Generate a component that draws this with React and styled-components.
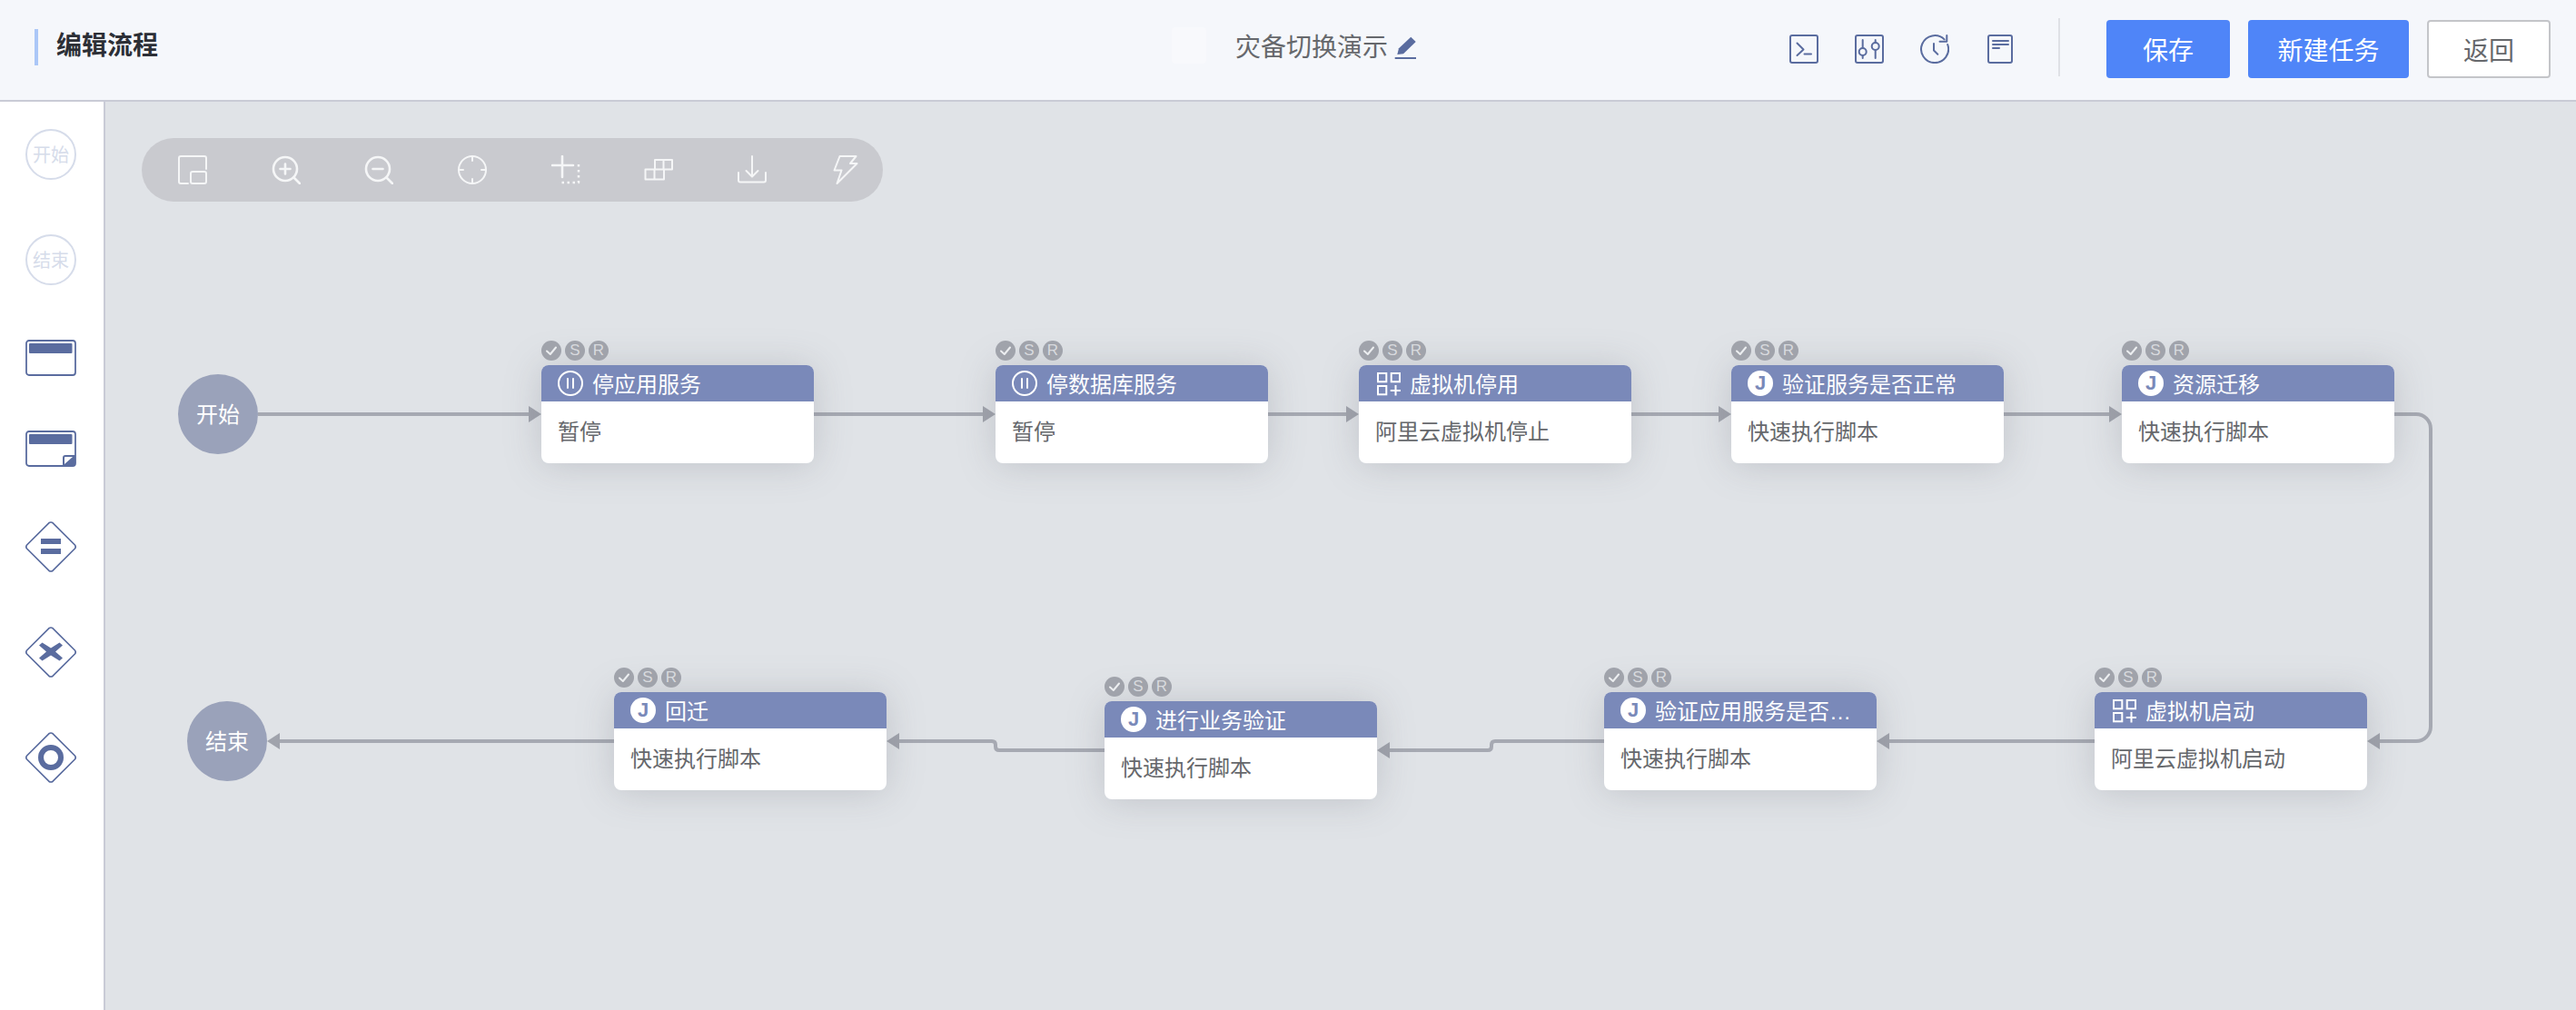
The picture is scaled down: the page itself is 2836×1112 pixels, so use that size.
import React from 'react';
import styled, { createGlobalStyle } from 'styled-components';

const ICON = '#5a6c9f';
const LINE = '#a6a9b2';
const SIDE_W = 116;
const HEAD_H = 112;

const GlobalStyle = createGlobalStyle`
  html, body {
    margin: 0;
    padding: 0;
    background: #fff;
    font-family: "Liberation Sans", "Noto Sans CJK SC", sans-serif;
  }
  * { box-sizing: border-box; }
`;

const Page = styled.div`
  width: 2836px;
  height: 1112px;
  display: flex;
  flex-direction: column;
  overflow: hidden;
`;

const Header = styled.header`
  height: ${HEAD_H}px;
  flex: none;
  display: grid;
  grid-template-columns: 1252px auto 1fr auto;
  align-items: center;
  padding: 0 28px 2px 38px;
  background: #f5f7fb;
  border-bottom: 2px solid #c9cbd6;
`;

const PageTitle = styled.h1`
  margin: 0 0 4px;
  height: 40px;
  padding-left: 20px;
  border-left: 4px solid #abc7f7;
  font-size: 28px;
  line-height: 37px;
  font-weight: 700;
  color: #2c2f36;
`;

const FlowName = styled.div`
  display: flex;
  align-items: center;
  margin-bottom: 2px;
  color: #66686c;
  font-size: 28px;
  line-height: 40px;
  svg { margin-left: 7px; }
`;

const Ghost = styled.span`
  width: 38px;
  height: 40px;
  margin: -6px 32px 0 0;
  border-radius: 4px;
  background: #f8f9fc;
`;

const Actions = styled.div`
  grid-column: 4;
  display: flex;
  align-items: center;
`;

const HeadIcons = styled.div`
  display: flex;
  gap: 40px;
  svg:last-child { margin-left: 2px; }
`;

const Divider = styled.span`
  width: 2px;
  height: 64px;
  margin: 0 51px 4px 46px;
  background: #dfe1e6;
`;

const Buttons = styled.div`
  display: flex;
  gap: 20px;
`;

const Button = styled.button`
  height: 64px;
  padding: 0;
  width: ${p => p.$w}px;
  border-radius: 4px;
  font: inherit;
  font-size: 28px;
  color: ${p => (p.$plain ? '#66686c' : '#fff')};
  background: ${p => (p.$plain ? '#fff' : '#4f85f8')};
  border: ${p => (p.$plain ? '2px solid #c4c5c9' : 'none')};
`;

const Main = styled.div`
  flex: 1;
  display: flex;
  min-height: 0;
`;

const Sidebar = styled.aside`
  width: ${SIDE_W}px;
  flex: none;
  display: flex;
  flex-direction: column;
  align-items: center;
  gap: 60px;
  padding: 30px 2px 0 0;
  background: #fff;
  border-right: 2px solid #c9cbd6;
`;

const Oval = styled.div`
  width: 56px;
  height: 56px;
  display: flex;
  align-items: center;
  justify-content: center;
  padding-bottom: 2px;
  border: 2px solid #d6dcea;
  border-radius: 50%;
  font-size: 20px;
  color: #d6dcea;
`;

const Canvas = styled.main`
  position: relative;
  flex: 1;
  background: #e0e3e7;
`;

const Toolbar = styled.div`
  position: absolute;
  left: 40px;
  top: 40px;
  width: 816px;
  height: 70px;
  display: flex;
  align-items: center;
  gap: 70.7px;
  padding-left: 40px;
  border-radius: 35px;
  background: #c9cacf;
`;

const Edges = styled.svg`
  position: absolute;
  inset: 0;
`;

const Circle = styled.div`
  position: absolute;
  left: ${p => p.$x - SIDE_W}px;
  top: ${p => p.$y - HEAD_H}px;
  width: 88px;
  height: 88px;
  display: flex;
  align-items: center;
  justify-content: center;
  padding-bottom: 3px;
  border-radius: 50%;
  background: #9aa2ba;
  color: #fff;
  font-size: 24px;
`;

const Node = styled.div`
  position: absolute;
  left: ${p => p.$x - SIDE_W}px;
  top: ${p => p.$y - HEAD_H}px;
  width: 300px;
  height: 108px;
  border-radius: 8px;
  background: #fff;
  box-shadow: 0 2px 40px rgba(110, 115, 125, 0.28);
`;

const Badges = styled.div`
  position: absolute;
  left: 0;
  top: -27px;
  display: flex;
  gap: 4px;
`;

const Badge = styled.span`
  width: 22px;
  height: 22px;
  display: flex;
  align-items: center;
  justify-content: center;
  border-radius: 50%;
  background: #a0a3ab;
  color: #d8dade;
  font-size: 17px;
  line-height: 22px;
`;

const NodeHead = styled.div`
  height: 40px;
  display: flex;
  align-items: center;
  gap: 10px;
  padding-left: 18px;
  border-radius: 8px 8px 0 0;
  background: #7a89b9;
  color: #fff;
  font-size: 24px;
`;

const NodeTitle = styled.span`
  max-width: 224px;
  height: 40px;
  overflow: hidden;
  white-space: nowrap;
  text-overflow: ellipsis;
  line-height: 43px;
`;

const NodeBody = styled.div`
  padding: 16px 18px 0;
  color: #66686c;
  font-size: 24px;
  line-height: 36px;
`;

const JMark = styled.span`
  width: 28px;
  height: 28px;
  flex: none;
  display: flex;
  align-items: center;
  justify-content: center;
  border-radius: 50%;
  background: #fff;
  color: #7a89b9;
  font-size: 22px;
  font-weight: 700;
`;

const Stroke = ({ size = 32, color = ICON, width = 2, children, ...rest }) => (
  <svg width={size} height={size} viewBox={`0 0 ${size} ${size}`} fill="none" stroke={color} strokeWidth={width} strokeLinecap="round" strokeLinejoin="round" {...rest}>
    {children}
  </svg>
);

const Pencil = () => (
  <svg width="24" height="26" viewBox="0 0 24 26" fill={ICON}>
    <path d="M3.3 20 L5 13.3 L18.3 .7 L23.7 6 L10 19.3 Z" />
    <rect x="0.7" y="23" width="23.6" height="2" />
  </svg>
);

const headIcons = [
  <><rect x="1" y="1" width="30" height="30" rx="2" /><path d="M8.5 9.5 15.5 16.5 8.5 23M16.5 21.5H24" /></>,
  <><rect x="1" y="1" width="30" height="30" rx="2" /><path d="M8.7 6V15M8.7 23V26M22.7 6V9M22.7 17V26" /><circle cx="8.7" cy="19" r="4" /><circle cx="22.7" cy="13" r="4" /></>,
  <><path d="M26.6 5.4A15 15 0 1 0 30.2 11" /><path d="M29.3 1V7.7H21.5M15 10V17.5L19.3 21.7" /></>,
  <><rect x="1" y="1" width="26" height="30" rx="2" /><path d="M6 7H23M6 11H23M6 15H13" /></>,
];

const toolIcons = [
  <><path d="M11 31H3A2 2 0 0 1 1 29V3A2 2 0 0 1 3 1H29A2 2 0 0 1 31 3V15" /><rect x="14" y="18" width="17" height="13" rx="2" /></>,
  <g strokeWidth="2.6"><circle cx="15" cy="15" r="13" /><path d="M24.5 24.5 31 31M15 9.5V20.5M9.5 15H20.5" /></g>,
  <g strokeWidth="2.6"><circle cx="15" cy="15" r="13" /><path d="M24.5 24.5 31 31M9.5 15H20.5" /></g>,
  <><circle cx="16" cy="16" r="15" /><path d="M16 1V6M16 26V31M1 16H6M26 16H31" /></>,
  <><path d="M1 11H24M12 1V24" strokeWidth="2.6" /><path d="M30 10V30H10" strokeDasharray="2.5 3.5" strokeLinecap="butt" strokeWidth="2.5" /></>,
  <><path d="M12 15.5V5H31V15.5H12ZM21.5 5V15.5M1.5 15.5H22V26.5H1.5ZM11.5 15.5V26.5" /></>,
  <><path d="M16 1V23M9.5 17 16 23.5 22.5 17M1 19V27.5A2 2 0 0 0 3 29.5H29A2 2 0 0 0 31 27.5V19" /></>,
  <path d="M9.5 1H27.5L21 9H28.5L6.5 31L11.5 16.5H3.5Z" />,
];

const Rect = ({ fold }) => (
  <svg width="56" height="40" viewBox="0 0 56 40">
    <rect x="1" y="1" width="54" height="38" rx="3" fill="#fff" stroke={ICON} strokeWidth="1.8" />
    <rect x="4" y="4" width="47.5" height="11" rx="1" fill={ICON} />
    {fold && (
      <>
        <path d="M41 39V30Q41 27 44 27H55V36Q55 39 52 39Z" fill={ICON} />
        <path d="M43 37V30Q43 29 44 29H52Z" fill="#fff" />
      </>
    )}
  </svg>
);

const Diamond = ({ children }) => (
  <svg width="56" height="56" viewBox="0 0 56 56" fill={ICON}>
    <path d="M25.8 1.8Q28 0.2 30.2 1.8L54.4 26Q56 28 54.4 30L30.2 54.2Q28 55.8 25.8 54.2L1.6 30Q0 28 1.6 26Z" fill="#fff" stroke={ICON} strokeWidth="1.7" />
    {children}
  </svg>
);

const nodes = [
  { x: 596, y: 402, title: '停应用服务', text: '暂停', icon: 'pause' },
  { x: 1096, y: 402, title: '停数据库服务', text: '暂停', icon: 'pause' },
  { x: 1496, y: 402, title: '虚拟机停用', text: '阿里云虚拟机停止', icon: 'grid' },
  { x: 1906, y: 402, title: '验证服务是否正常', text: '快速执行脚本', icon: 'j' },
  { x: 2336, y: 402, title: '资源迁移', text: '快速执行脚本', icon: 'j' },
  { x: 2306, y: 762, title: '虚拟机启动', text: '阿里云虚拟机启动', icon: 'grid' },
  { x: 1766, y: 762, title: '验证应用服务是否正常', text: '快速执行脚本', icon: 'j' },
  { x: 1216, y: 772, title: '进行业务验证', text: '快速执行脚本', icon: 'j' },
  { x: 676, y: 762, title: '回迁', text: '快速执行脚本', icon: 'j' },
];

// page coordinates, the svg below has its viewBox shifted to match
const edges = [
  { d: 'M284 456H584', tip: [596, 456, 1] },
  { d: 'M896 456H1084', tip: [1096, 456, 1] },
  { d: 'M1396 456H1484', tip: [1496, 456, 1] },
  { d: 'M1796 456H1894', tip: [1906, 456, 1] },
  { d: 'M2206 456H2324', tip: [2336, 456, 1] },
  { d: 'M2636 456H2660A16 16 0 0 1 2676 472V800A16 16 0 0 1 2660 816H2618', tip: [2606, 816, -1] },
  { d: 'M2306 816H2078', tip: [2066, 816, -1] },
  { d: 'M1766 816H1646Q1642 816 1642 820V822Q1642 826 1638 826H1528', tip: [1516, 826, -1] },
  { d: 'M1216 826H1100Q1096 826 1096 822V820Q1096 816 1092 816H988', tip: [976, 816, -1] },
  { d: 'M676 816H306', tip: [294, 816, -1] },
];

function NodeIcon({ type }) {
  if (type === 'j') return <JMark>J</JMark>;
  if (type === 'pause') {
    return (
      <Stroke size={28} color="#fff" style={{ flex: 'none' }}>
        <circle cx="14" cy="14" r="13" />
        <path d="M11 9V19M17 9V19" />
      </Stroke>
    );
  }
  return (
    <Stroke size={28} color="#fff" strokeLinecap="butt" strokeLinejoin="miter" style={{ flex: 'none' }}>
      <rect x="3" y="3" width="9.3" height="9.3" />
      <rect x="17.7" y="3" width="9.3" height="9.3" />
      <rect x="3" y="17" width="9.3" height="9.3" />
      <path d="M16.7 22H28M22.5 16V27.5" />
    </Stroke>
  );
}

function FlowNode({ node }) {
  return (
    <Node $x={node.x} $y={node.y}>
      <Badges>
        <Badge>
          <Stroke size={22} color="#eceef0">
            <path d="M6 11.5 9.8 15 16 7.5" />
          </Stroke>
        </Badge>
        <Badge>S</Badge>
        <Badge>R</Badge>
      </Badges>
      <NodeHead>
        <NodeIcon type={node.icon} />
        <NodeTitle>{node.title}</NodeTitle>
      </NodeHead>
      <NodeBody>{node.text}</NodeBody>
    </Node>
  );
}

export default function App() {
  return (
    <Page>
      <GlobalStyle />
      <Header>
        <PageTitle>编辑流程</PageTitle>
        <FlowName>
          <Ghost />
          灾备切换演示
          <Pencil />
        </FlowName>
        <Actions>
          <HeadIcons>
            {headIcons.map((icon, i) => <Stroke key={i}>{icon}</Stroke>)}
          </HeadIcons>
          <Divider />
          <Buttons>
            <Button $w={136}>保存</Button>
            <Button $w={177}>新建任务</Button>
            <Button $w={136} $plain>返回</Button>
          </Buttons>
        </Actions>
      </Header>
      <Main>
        <Sidebar>
          <Oval>开始</Oval>
          <Oval>结束</Oval>
          <Rect />
          <Rect fold />
          <Diamond>
            <rect x="17" y="19" width="22" height="6" />
            <rect x="17" y="30" width="22" height="6" />
          </Diamond>
          <Diamond>
            <path d="M18.5 17.5 28 23.5 37.5 17.5 41 20.5 33 27.5 41 34.5 37.5 37.5 28 31.5 18.5 37.5 15 34.5 23 27.5 15 20.5Z" />
          </Diamond>
          <Diamond>
            <ellipse cx="28" cy="28" rx="11" ry="11" fill="none" stroke={ICON} strokeWidth="6" />
          </Diamond>
        </Sidebar>
        <Canvas>
          <Edges width="2720" height="1000" viewBox={`${SIDE_W} ${HEAD_H} 2720 1000`} fill="none">
            {edges.map((e, i) => (
              <g key={i}>
                <path d={e.d} stroke={LINE} strokeWidth="4" />
                <path d={`M${e.tip[0]} ${e.tip[1]}L${e.tip[0] - 14 * e.tip[2]} ${e.tip[1] - 9}V${e.tip[1] + 9}Z`} fill="#a0a3ac" />
              </g>
            ))}
          </Edges>
          <Toolbar>
            {toolIcons.map((icon, i) => <Stroke key={i} color="#f5f6f7">{icon}</Stroke>)}
          </Toolbar>
          <Circle $x={196} $y={412}>开始</Circle>
          <Circle $x={206} $y={772}>结束</Circle>
          {nodes.map(n => <FlowNode key={n.x + n.title} node={n} />)}
        </Canvas>
      </Main>
    </Page>
  );
}
